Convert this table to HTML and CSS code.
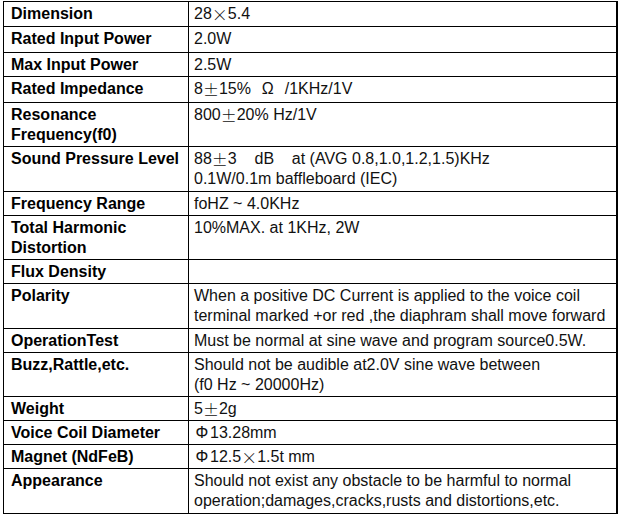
FILE: index.html
```html
<!DOCTYPE html>
<html>
<head>
<meta charset="utf-8">
<link rel="stylesheet" href="styles.css">
</head>
<body>
<table class="spec">
<colgroup><col class="c1"><col class="c2"></colgroup>
<tr class="pb1"><th>Dimension</th><td>28<span class="fw cjk">×</span>5.4</td></tr>
<tr class="pb2"><th>Rated Input Power</th><td>2.0W</td></tr>
<tr><th>Max Input Power</th><td>2.5W</td></tr>
<tr class="pb2"><th>Rated Impedance</th><td>8<span class="fw cjk">±</span>15%&nbsp;&nbsp;<span class="fw">Ω</span>&nbsp;&nbsp;/1KHz/1V</td></tr>
<tr><th>Resonance<br>Frequency(f0)</th><td>800<span class="fw cjk">±</span>20% Hz/1V</td></tr>
<tr class="pb1"><th>Sound Pressure Level</th><td>88<span class="fw cjk">±</span>3&nbsp;&nbsp;&nbsp;&nbsp;dB&nbsp;&nbsp;&nbsp;&nbsp;at (AVG 0.8,1.0,1.2,1.5)KHz<br>0.1W/0.1m baffleboard (IEC)</td></tr>
<tr><th>Frequency Range</th><td>foHZ ~ 4.0KHz</td></tr>
<tr><th>Total Harmonic<br>Distortion</th><td>10%MAX. at 1KHz, 2W</td></tr>
<tr><th>Flux Density</th><td></td></tr>
<tr class="pb1"><th>Polarity</th><td>When a positive DC Current is applied to the voice coil<br>terminal marked +or red ,the diaphram shall move forward</td></tr>
<tr><th>OperationTest</th><td>Must be normal at sine wave and program source0.5W.</td></tr>
<tr><th>Buzz,Rattle,etc.</th><td>Should not be audible at2.0V sine wave between<br>(f0 Hz ~ 20000Hz)</td></tr>
<tr><th>Weight</th><td>5<span class="fw cjk">±</span>2g</td></tr>
<tr><th>Voice Coil Diameter</th><td><span class="fw">Φ</span>13.28mm</td></tr>
<tr><th>Magnet (NdFeB)</th><td><span class="fw">Φ</span>12.5<span class="fw cjk">×</span>1.5t mm</td></tr>
<tr class="pb1"><th>Appearance</th><td>Should not exist any obstacle to be harmful to normal<br>operation;damages,cracks,rusts and distortions,etc.</td></tr>
</table>
</body>
</html>
```

FILE: styles.css
```css
html, body {
  margin: 0;
  padding: 0;
  background: #fff;
}
body {
  padding: 1px 0 0 3px;
  font-family: "Liberation Sans", Arial, sans-serif;
  font-size: 16px;
  color: #000;
}
.spec {
  border-collapse: collapse;
  width: 615px;
  table-layout: fixed;
  border-right: 2px solid #000;
}
.c1 { width: 185px; }
.spec th,
.spec td {
  border: 1px solid #000;
  vertical-align: top;
  line-height: 20px;
  padding: 2px 2px 1px 5px;
  text-align: left;
  white-space: nowrap;
  overflow: visible;
}
.spec th {
  padding-left: 7px;
  font-weight: bold;
}
.spec td {
  color: #111;
}
.spec tr.pb1 th, .spec tr.pb1 td { padding-bottom: 2px; }
.spec tr.pb2 th, .spec tr.pb2 td { padding-bottom: 3px; }
.fw {
  display: inline-block;
  width: 1em;
  text-align: center;
  line-height: 20px;
  vertical-align: top;
}
.cjk {
  font-family: "Noto Sans CJK SC", sans-serif;
  font-weight: 300;
}
```
